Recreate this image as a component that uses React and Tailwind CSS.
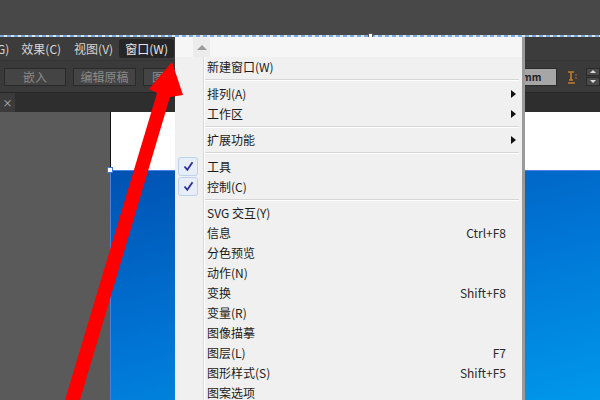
import React from 'react';

const font = { fontFamily: '"Noto Sans CJK SC", "Noto Sans", sans-serif' };

const items = [
  { type: 'item', label: '新建窗口(W)' },
  { type: 'sep' },
  { type: 'item', label: '排列(A)', sub: true },
  { type: 'item', label: '工作区', sub: true },
  { type: 'sep' },
  { type: 'item', label: '扩展功能', sub: true },
  { type: 'sep' },
  { type: 'item', label: '工具', checked: true },
  { type: 'item', label: '控制(C)', checked: true },
  { type: 'sep' },
  { type: 'item', label: 'SVG 交互(Y)' },
  { type: 'item', label: '信息', key: 'Ctrl+F8' },
  { type: 'item', label: '分色预览' },
  { type: 'item', label: '动作(N)' },
  { type: 'item', label: '变换', key: 'Shift+F8' },
  { type: 'item', label: '变量(R)' },
  { type: 'item', label: '图像描摹' },
  { type: 'item', label: '图层(L)', key: 'F7' },
  { type: 'item', label: '图形样式(S)', key: 'Shift+F5' },
  { type: 'item', label: '图案选项' },
];

function MenuRow({ item }) {
  if (item.type === 'sep') {
    return (
      <div className="flex h-[6.5px] items-center">
        <div className="w-[29px] h-full" />
        <div className="flex-1 border-t border-[#d6d6d6] border-b-white border-b mr-[3px]" />
      </div>
    );
  }
  return (
    <div className="flex h-[20px] items-center">
      <div className="w-[29px] h-full flex items-center justify-end pr-[6px]">
        {item.checked && (
          <div className="w-[20px] h-[19px] rounded-[3px] border border-[#bcd2ee] bg-[#e8eef8] flex items-center justify-center">
            <svg width="11" height="11" viewBox="0 0 11 11">
              <path d="M1.5 5.5 L4.3 8.8 L9.5 1.2" fill="none" stroke="#2b2c9c" strokeWidth="1.8" />
            </svg>
          </div>
        )}
      </div>
      <div className="flex-1 flex items-center pl-[3px] pr-[16px] text-[12px] text-[#1b1b1b]">
        <span className="flex-1">{item.label}</span>
        {item.key && <span className="text-[#2a2a2a]">{item.key}</span>}
        {item.sub && (
          <svg width="5" height="8" viewBox="0 0 5 8" className="-mr-[10px]">
            <path d="M0 0 L5 4 L0 8 Z" fill="#111" />
          </svg>
        )}
      </div>
    </div>
  );
}

export default function App() {
  return (
    <div className="relative w-[600px] h-[400px] overflow-hidden bg-[#484848] flex flex-col" style={font}>
      {/* top band */}
      <div className="h-[35px] bg-[#484848]" />
      <div className="h-[2px] bg-[repeating-linear-gradient(90deg,#7ba9e2_0_4px,#dbe6f3_4px_7px)]" />

      {/* menu bar */}
      <div className="h-[23px] bg-[#3c3c3c] flex items-center text-[12px] text-[#d6d6d6]">
        <span className="ml-[-3px] mr-[12px]">G)</span>
        <span className="mr-[13px]">效果(C)</span>
        <span className="mr-[6px]">视图(V)</span>
        <span className="w-[55px] h-[19px] flex items-center justify-center rounded-[3px] bg-[#262626] text-[#e8e8e8]">窗口(W)</span>
      </div>

      {/* control bar */}
      <div className="h-[32px] bg-[#3a3a3a] border-t border-[#343434] flex items-center gap-[7px] pl-[4px] text-[12px] text-[#8a8a8a]">
        <div className="w-[62px] h-[18px] border border-[#2a2a2a] bg-[#444] flex items-center justify-center">嵌入</div>
        <div className="w-[63px] h-[18px] border border-[#2a2a2a] bg-[#444] flex items-center justify-center">编辑原稿</div>
        <div className="w-[40px] h-[18px] border border-[#2a2a2a] bg-[#444] flex items-center pl-[8px]">图</div>
        <div className="flex-1" />
        <div className="w-[41px] h-[18px] border border-[#2a2a2a] bg-[#a6a6a6] text-[#222] text-[10px] flex items-center pl-[5px] font-bold">mm</div>
        <svg width="10" height="14" viewBox="0 0 10 14" className="ml-[3px]">
          <path d="M1 2 H7 M4 2 V10 M2 10 H6 M1 13 H8" stroke="#c47b2c" strokeWidth="1.6" fill="none" />
          <circle cx="9" cy="5" r="0.8" fill="#c47b2c" />
          <circle cx="9" cy="8" r="0.8" fill="#c47b2c" />
        </svg>
        <div className="w-[14px] h-[18px] flex flex-col gap-[1px] ml-[2px]">
          <div className="flex-1 bg-[#4a4a4a] border border-[#2a2a2a] flex items-center justify-center">
            <svg width="6" height="3" viewBox="0 0 6 3"><path d="M0 3 L3 0 L6 3 Z" fill="#ddd" /></svg>
          </div>
          <div className="flex-1 bg-[#4a4a4a] border border-[#2a2a2a] flex items-center justify-center">
            <svg width="6" height="3" viewBox="0 0 6 3"><path d="M0 0 L3 3 L6 0 Z" fill="#ddd" /></svg>
          </div>
        </div>
      </div>

      {/* tab bar */}
      <div className="h-[20px] bg-[#2e2e2e] border-t border-[#262626] flex">
        <div className="w-[15px] bg-[#3b3b3b] flex items-center justify-center text-[10px] text-[#bbb]">×</div>
      </div>

      {/* workspace */}
      <div className="flex-1 flex bg-[#5a5a5a]">
        <div className="w-[110px]" />
        <div className="flex-1 flex flex-col relative">
          <div className="h-[58px] bg-white border-l border-[#111]" />
          <div className="flex-1 border-l border-[#4a7fe0] border-t border-t-[#4a80e8] bg-[linear-gradient(165deg,#0052b2_0%,#0074d4_50%,#0098ea_100%)]" />
          <div className="absolute left-[-3px] top-[55px] w-[6px] h-[6px] bg-white border border-[#3a78e0]" />
        </div>
      </div>

      {/* handle on top dashed line */}
      <div className="absolute left-[368px] top-[33px] w-[5px] h-[5px] bg-white border border-[#555]" />

      {/* window dropdown menu */}
      <div className="absolute left-[175px] top-[37px] w-[350px] bottom-0 bg-[#f0f0f0] border-r-[3px] border-[#9a9a9a] flex flex-col">
        <div className="h-[21px] bg-[#f6f6f6] flex">
          <div className="ml-[18px] w-[17px] h-[20px] bg-[#ececec] flex items-start justify-center pt-[8px]">
            <svg width="10" height="5" viewBox="0 0 10 5"><path d="M0 5 L5 0 L10 5 Z" fill="#9a9a9a" /></svg>
          </div>
        </div>
        <div className="relative flex-1">
          <div className="absolute left-[28px] top-0 bottom-0 w-[2px] border-l border-[#dadada] bg-white" />
          {items.map((it, i) => (
            <MenuRow key={i} item={it} />
          ))}
        </div>
      </div>

      {/* red annotation arrow */}
      <svg className="absolute inset-0" width="600" height="400" viewBox="0 0 600 400">
        <polygon
          points="65,400 157,93 149,89 172,62 183,95 170,97 80,400"
          fill="#ff0000"
        />
      </svg>
    </div>
  );
}
